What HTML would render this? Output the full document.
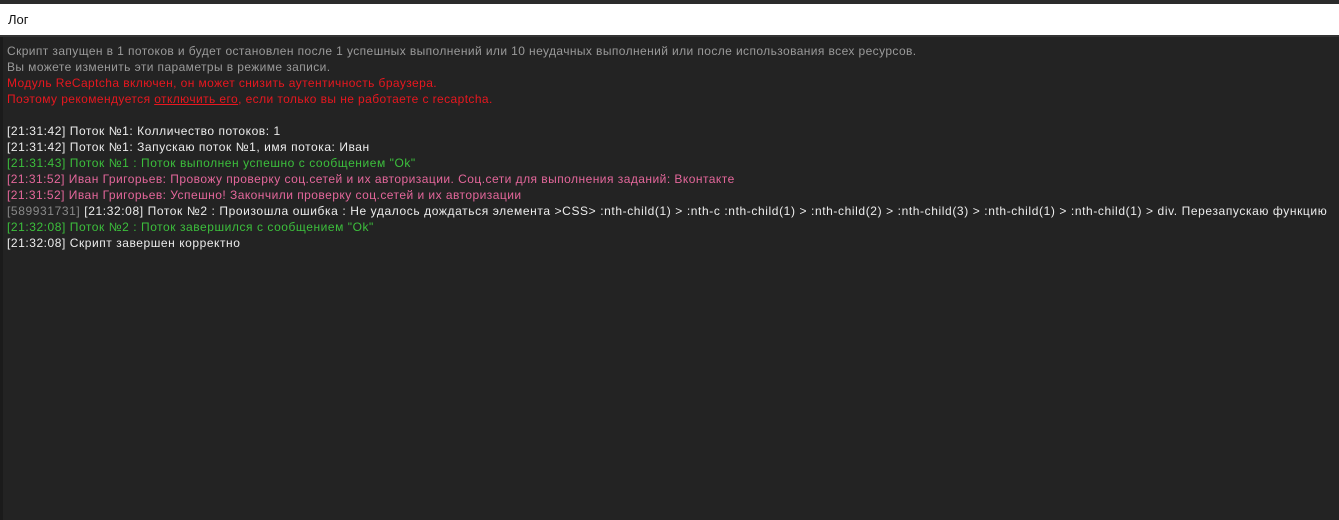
<!DOCTYPE html>
<html><head><meta charset="utf-8"><style>
html,body{margin:0;padding:0;width:1339px;height:520px;overflow:hidden;background:#232323;font-family:"Liberation Sans","DejaVu Sans",sans-serif;}
.top{position:absolute;left:0;top:0;width:1339px;height:4px;background:#2b2b2b;}
.bar{position:absolute;left:0;top:4px;width:1339px;height:31px;background:#fff;font-size:13px;color:#111;line-height:31px;}
.bar span{position:absolute;left:8px;top:0;}
.sep{position:absolute;left:0;top:35px;width:1339px;height:2px;background:#333;}
.lb{position:absolute;left:0;top:37px;width:3px;height:483px;background:#1b1b1b;}
.log{position:absolute;left:7px;top:43px;font-size:12px;line-height:16px;white-space:pre;letter-spacing:0.55px;}
.g{color:#9a9a9a;letter-spacing:0.4px}.r{color:#e8171f;letter-spacing:0.41px}.w{color:#ececec}.gr{color:#3cbf3c}.p{color:#e4679b;letter-spacing:0.46px}.t{color:#888}
.long{letter-spacing:0.6px}
u{text-decoration:underline}
</style></head><body>
<div class="top"></div>
<div class="bar"><span>Лог</span></div>
<div class="sep"></div>
<div class="lb"></div>
<div class="log"><div class="g">Скрипт запущен в 1 потоков и будет остановлен после 1 успешных выполнений или 10 неудачных выполнений или после использования всех ресурсов.</div><div class="g">Вы можете изменить эти параметры в режиме записи.</div><div class="r">Модуль ReCaptcha включен, он может снизить аутентичность браузера.</div><div class="r">Поэтому рекомендуется <u>отключить его</u>, если только вы не работаете с recaptcha.</div><div>&nbsp;</div><div class="w">[21:31:42] Поток №1: Колличество потоков: 1</div><div class="w">[21:31:42] Поток №1: Запускаю поток №1, имя потока: Иван</div><div class="gr">[21:31:43] Поток №1 : Поток выполнен успешно с сообщением "Ok"</div><div class="p">[21:31:52] Иван Григорьев: Провожу проверку соц.сетей и их авторизации. Соц.сети для выполнения заданий: Вконтакте</div><div class="p">[21:31:52] Иван Григорьев: Успешно! Закончили проверку соц.сетей и их авторизации</div><div class="w long"><span class="t">[589931731]</span> [21:32:08] Поток №2 : Произошла ошибка : Не удалось дождаться элемента &gt;CSS&gt; :nth-child(1) &gt; :nth-c :nth-child(1) &gt; :nth-child(2) &gt; :nth-child(3) &gt; :nth-child(1) &gt; :nth-child(1) &gt; div. Перезапускаю функцию</div><div class="gr">[21:32:08] Поток №2 : Поток завершился с сообщением "Ok"</div><div class="w">[21:32:08] Скрипт завершен корректно</div></div>
</body></html>
